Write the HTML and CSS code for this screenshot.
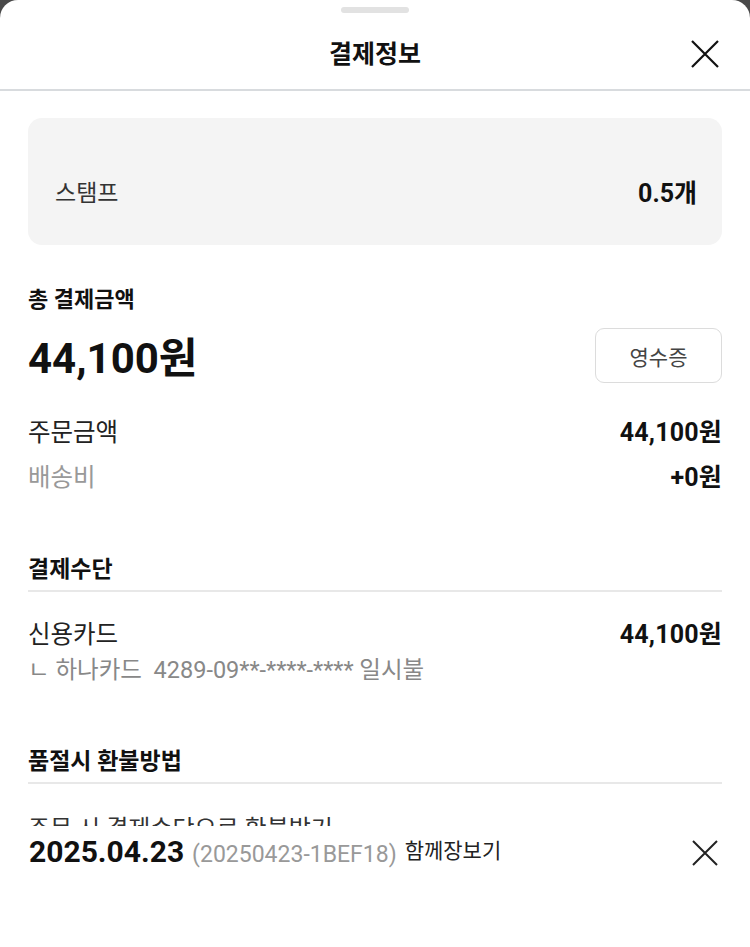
FILE: index.html
```html
<!DOCTYPE html>
<html lang="ko">
<head>
<meta charset="utf-8">
<title>결제정보</title>
<link rel="stylesheet" href="styles.css">
</head>
<body>
<div class="sheet">
  <div class="handle"></div>
  <header class="header">
    <h1 class="title">결제정보</h1>
    <button class="close" aria-label="닫기">
      <svg width="28" height="28" viewBox="0 0 28 28"><path d="M1 1L27 27M27 1L1 27" stroke="#111" stroke-width="2.2" fill="none"/></svg>
    </button>
  </header>
  <main class="content">
    <div class="stamp-box">
      <span class="stamp-label">스탬프</span>
      <span class="stamp-value">0.5개</span>
    </div>

    <h2 class="total-title">총 결제금액</h2>
    <div class="total-row">
      <span class="total-amount">44,100원</span>
      <button class="receipt">영수증</button>
    </div>

    <div class="line-row first">
      <span class="line-label">주문금액</span>
      <span class="line-value">44,100원</span>
    </div>
    <div class="line-row">
      <span class="line-label muted">배송비</span>
      <span class="line-value">+0원</span>
    </div>

    <h2 class="section-title pay-title">결제수단</h2>
    <div class="line-row card-row">
      <span class="line-label">신용카드</span>
      <span class="line-value">44,100원</span>
    </div>
    <div class="card-detail">ㄴ 하나카드&nbsp; 4289-09**-****-**** 일시불</div>

    <h2 class="section-title refund-title">품절시 환불방법</h2>
    <div class="refund-text">주문 시 결제수단으로 환불받기</div>
  </main>
</div>
<div class="bottom-bar">
  <div class="order">
    <span class="order-date">2025.04.23</span>
    <span class="order-no">(20250423-1BEF18)</span>
    <span class="order-type">함께장보기</span>
  </div>
  <button class="close small" aria-label="닫기">
    <svg width="26" height="26" viewBox="0 0 26 26"><path d="M1 1L25 25M25 1L1 25" stroke="#222" stroke-width="2" fill="none"/></svg>
  </button>
</div>
</body>
</html>
```

FILE: styles.css
```css
* { box-sizing: border-box; }
html, body { margin: 0; padding: 0; }
body {
  background: #4a4a4a;
  font-family: "Roboto", "Noto Sans CJK KR", sans-serif;
  color: #111;
  height: 947px;
  overflow: hidden;
}
.sheet {
  background: #fff;
  border-radius: 18px 18px 0 0;
  min-height: 947px;
  padding-top: 7px;
}
.handle {
  width: 68px;
  height: 6px;
  border-radius: 3px;
  background: #e2e2e2;
  margin: 0 auto;
}
.header {
  height: 78px;
  display: flex;
  align-items: center;
  justify-content: center;
  position: relative;
  border-bottom: 2px solid #d8dbde;
}
.title {
  margin: 0;
  font-size: 25px;
  font-weight: 700;
  letter-spacing: 0;
  padding-top: 2px;
}
.close {
  background: none;
  border: 0;
  padding: 0;
  display: flex;
  cursor: pointer;
}
.header .close {
  position: absolute;
  right: 31px;
  top: 27px;
}
.content {
  padding: 0 28px;
}
.stamp-box {
  margin-top: 27px;
  background: #f4f4f4;
  border-radius: 14px;
  padding: 62px 25px 37px 27px;
  display: flex;
  justify-content: space-between;
  align-items: center;
  line-height: 28px;
}
.stamp-label { font-size: 23px; color: #333; }
.stamp-value { font-size: 25px; font-weight: 700; letter-spacing: 0; }
.total-title {
  margin: 42px 0 0;
  font-size: 22px;
  font-weight: 700;
  line-height: 26px;
}
.total-row {
  margin-top: 15px;
  display: flex;
  justify-content: space-between;
  align-items: center;
}
.total-amount {
  font-size: 42px;
  font-weight: 700;
  letter-spacing: 0;
  line-height: 48px;
  padding-top: 6px;
}
.receipt {
  width: 127px;
  height: 55px;
  background: #fff;
  border: 1.5px solid #dcdcdc;
  border-radius: 9px;
  font-family: inherit;
  font-size: 21px;
  color: #444;
}
.line-row {
  display: flex;
  justify-content: space-between;
  align-items: center;
  line-height: 30px;
  margin-top: 15px;
}
.line-row.first { margin-top: 35px; }
.line-label { font-size: 24.5px; color: #222; }
.line-label.muted { color: #999; }
.line-value { font-size: 25px; font-weight: 700; letter-spacing: 0.2px; }
.section-title {
  margin: 0;
  font-size: 23px;
  font-weight: 700;
  line-height: 28px;
  padding-bottom: 6px;
  border-bottom: 2px solid #e8e8e8;
}
.pay-title { margin-top: 63px; }
.card-row { margin-top: 28px; }
.card-detail {
  margin-top: 6px;
  font-size: 23.5px;
  line-height: 28px;
  color: #888;
}
.refund-title { margin-top: 64px; }
.refund-text {
  margin-top: 30px;
  font-size: 24px;
  line-height: 30px;
  color: #333;
}
.bottom-bar {
  position: fixed;
  left: 0;
  right: 0;
  bottom: 0;
  height: 121px;
  background: #fff;
  display: flex;
  justify-content: space-between;
  align-items: flex-start;
  padding: 11px 32px 0 29px;
}
.order {
  display: flex;
  align-items: baseline;
  gap: 8px;
  line-height: 30px;
}
.order-date { font-size: 30px; font-weight: 700; letter-spacing: 0; }
.order-no { font-size: 23px; color: #999; }
.order-type { font-size: 21px; color: #222; margin-left: 0; position: relative; top: -4px; }
.bottom-bar .close { margin-top: 3px; }
```
